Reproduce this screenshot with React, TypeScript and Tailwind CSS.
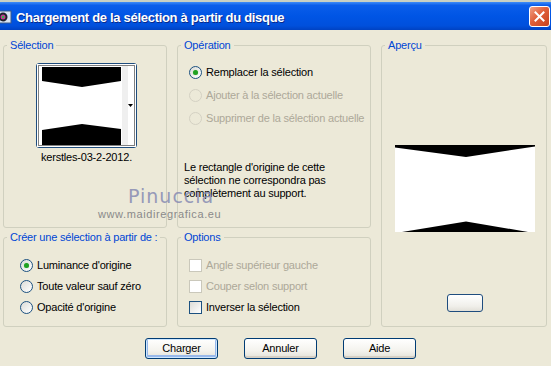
import React from "react";

function Radio({ checked = false, disabled = false }: { checked?: boolean; disabled?: boolean }) {
  if (disabled) {
    return <span className="w-[13px] h-[13px] rounded-full border border-[#D4D1C3] bg-[#ECE9D8] shrink-0" />;
  }
  return (
    <span className="w-[13px] h-[13px] rounded-full border border-[#1C5180] bg-[linear-gradient(135deg,#DCDCD7,#FFFFFF)] shrink-0 flex items-center justify-center">
      {checked && <span className="w-[5px] h-[5px] rounded-full bg-[#21A121] shadow-[0_0_1px_#7FD37F]" />}
    </span>
  );
}

function Check({ disabled = false }: { disabled?: boolean }) {
  if (disabled) {
    return <span className="w-[13px] h-[13px] border border-[#CAC8BB] bg-white shrink-0" />;
  }
  return <span className="w-[13px] h-[13px] border border-[#1C5180] bg-[linear-gradient(135deg,#DCDCD7,#FFFFFF)] shrink-0" />;
}

function Option({ label, kind, checked, disabled }: { label: string; kind: "radio" | "check"; checked?: boolean; disabled?: boolean }) {
  return (
    <div className="flex items-center gap-[4px] h-[13px]">
      {kind === "radio" ? <Radio checked={checked} disabled={disabled} /> : <Check disabled={disabled} />}
      <span className={disabled ? "text-[#ACA899] leading-[13px] whitespace-nowrap" : "text-black leading-[13px] whitespace-nowrap"}>{label}</span>
    </div>
  );
}

function Group({ title, className, children }: { title: string; className?: string; children: React.ReactNode }) {
  return (
    <fieldset className={"border border-[#D0D0BF] rounded-[3px] min-w-0 " + (className || "")}>
      <legend className="ml-[3px] px-[3px] text-[#0046D5] leading-[13px] whitespace-nowrap">{title}</legend>
      {children}
    </fieldset>
  );
}

function XpButton({ label, isDefault }: { label: string; isDefault?: boolean }) {
  return (
    <button
      className={
        "w-[73px] h-[21px] rounded-[3px] border border-[#003C74] bg-[linear-gradient(180deg,#FFFFFF_0%,#F4F3EE_60%,#E3E1D8_100%)] text-black leading-[13px] " +
        (isDefault ? "shadow-[inset_0_0_0_1px_#CEE7FF,inset_0_-1px_0_2px_#98B8EA]" : "shadow-[inset_0_-2px_0_#D6D0C5]")
      }
    >
      {label}
    </button>
  );
}

export default function App() {
  return (
    <div className="w-[551px] h-[366px] bg-[#ECE9D8] font-['Liberation_Sans',Arial,sans-serif] text-[11px] tracking-[-0.2px] text-black flex flex-col overflow-hidden relative">
      <div className="h-[2px] bg-[#C8CFC3]" />
      <div className="h-[28px] flex items-center bg-[linear-gradient(180deg,#3D8BF8_0%,#0A5DEA_12%,#0055E5_50%,#0050DC_85%,#0042C2_100%)]">
        <svg width="14" height="14" viewBox="0 0 14 14" className="ml-[-2px] mt-[2px] shrink-0">
          <rect x="0" y="1" width="13" height="12" fill="#D8E4F4" stroke="#3A5A8A" />
          <circle cx="5" cy="7" r="4.5" fill="#1E1E2A" />
          <circle cx="5" cy="7" r="2.5" fill="#C23A8F" />
          <circle cx="5" cy="7" r="1.2" fill="#33B84A" />
        </svg>
        <span className="ml-[4px] mt-[3px] text-white font-bold text-[13px] tracking-[-0.3px] [text-shadow:1px_1px_0_#0A2A8A]">
          Chargement de la sélection à partir du disque
        </span>
        <div className="ml-auto mr-[1px] mt-[1px] w-[21px] h-[21px] rounded-[3px] border border-white bg-[linear-gradient(135deg,#F0A085_0%,#E0603A_45%,#C7411C_100%)] flex items-center justify-center">
          <svg width="11" height="11" viewBox="0 0 11 11">
            <path d="M1.5 1.5 L9.5 9.5 M9.5 1.5 L1.5 9.5" stroke="white" strokeWidth="2" strokeLinecap="square" />
          </svg>
        </div>
      </div>

      <div className="pt-[9px] px-[3px] grid grid-cols-[164px_194px_166px] grid-rows-[189px_96px] gap-x-[10px] gap-y-[3px]">
        <Group title="Sélection">
          <div className="ml-[32px] mt-[11px] w-[101px] flex flex-col">
            <div className="relative w-[101px] h-[85px] rounded-[3px] border border-[#1F4D7E] bg-white">
              <svg width="99" height="83" viewBox="0 0 99 83" className="block">
                <rect x="0" y="0" width="99" height="83" fill="white" />
                <rect x="85" y="2" width="6" height="79" fill="#EFEFEF" />
                <polygon points="5,3 84,3 84,17 45,23 5,17" fill="black" />
                <polygon points="5,66 45,60 84,65 84,81 5,81" fill="black" />
                <polygon points="91,40 96,40 93.5,43" fill="black" />
                <rect x="1.5" y="1.5" width="96" height="80" fill="none" stroke="black" strokeDasharray="1 1" />
              </svg>
            </div>
            <div className="mt-[3px] text-center leading-[13px] whitespace-nowrap">kerstles-03-2-2012.</div>
          </div>
        </Group>

        <Group title="Opération">
          <div className="pl-[11px] mt-[14px] flex flex-col gap-[10px]">
            <Option kind="radio" checked label="Remplacer la sélection" />
            <Option kind="radio" disabled label="Ajouter à la sélection actuelle" />
            <Option kind="radio" disabled label="Supprimer de la sélection actuelle" />
          </div>
          <p className="pl-[6px] mt-[36px] leading-[13px]">
            Le rectangle d'origine de cette
            <br />
            sélection ne correspondra pas
            <br />
            complètement au support.
          </p>
        </Group>

        <Group title="Aperçu" className="row-span-2">
          <div className="flex flex-col items-center">
            <svg width="140" height="87" viewBox="0 0 140 87" className="mt-[93px] ml-[2px] block">
              <rect x="0" y="0" width="140" height="87" fill="white" />
              <polygon points="0,0 140,0 140,1.5 71,12 0,2.5" fill="black" />
              <polygon points="7,87 71,76.5 133,87" fill="black" />
            </svg>
            <div className="mt-[62px] ml-[2px] w-[36px] h-[18px] rounded-[3px] border border-[#1F4D7E] bg-[linear-gradient(180deg,#FFFFFF,#F0EFEA_70%,#E2E0D8)]" />
          </div>
        </Group>

        <Group title="Créer une sélection à partir de :">
          <div className="pl-[16px] mt-[15px] flex flex-col gap-[8px]">
            <Option kind="radio" checked label="Luminance d'origine" />
            <Option kind="radio" label="Toute valeur sauf zéro" />
            <Option kind="radio" label="Opacité d'origine" />
          </div>
        </Group>

        <Group title="Options">
          <div className="pl-[11px] mt-[15px] flex flex-col gap-[8px]">
            <Option kind="check" disabled label="Angle supérieur gauche" />
            <Option kind="check" disabled label="Couper selon support" />
            <Option kind="check" label="Inverser la sélection" />
          </div>
        </Group>
      </div>

      <div className="mt-[11px] pl-[145px] flex gap-[26px]">
        <XpButton label="Charger" isDefault />
        <XpButton label="Annuler" />
        <XpButton label="Aide" />
      </div>

      <div className="absolute left-[128px] top-[187px] font-['DejaVu_Sans',sans-serif] text-[19px] leading-[19px] tracking-[1px] text-[#8D91B5] opacity-90 pointer-events-none">
        Pinuccia
      </div>
      <div className="absolute left-[98px] top-[208px] text-[11px] leading-[12px] tracking-[0.6px] text-[#8A8A8A] pointer-events-none">
        www.maidiregrafica.eu
      </div>
    </div>
  );
}
